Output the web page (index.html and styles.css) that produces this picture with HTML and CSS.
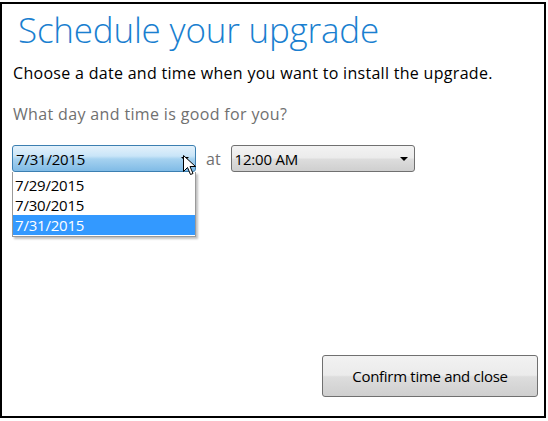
FILE: index.html
```html
<!DOCTYPE html>
<html lang="en">
  <head>
    <meta charset="UTF-8" />
    <title>Schedule your upgrade</title>
    <link rel="stylesheet" href="styles.css">
  </head>
  <body>
    <div class="frame">
      <h1 class="title">Schedule your upgrade</h1>
      <p class="lead">Choose a date and time when you want to install the upgrade.</p>
      <p class="question">What day and time is good for you?</p>

      <div class="pickers">
        <div class="combo-wrap">
          <div class="combo combo-open">
            <span>7/31/2015</span>
            <span class="arrow"></span>
          </div>
          <ul class="dropdown">
            <li>7/29/2015</li>
            <li>7/30/2015</li>
            <li class="selected">7/31/2015</li>
          </ul>
          <svg class="cursor" width="13" height="21" viewBox="0 0 13 21">
            <path d="M0.5 0.5 L0.5 16.5 L4.5 12.5 L7.5 19.5 L10 18.5 L7 11.5 L12.5 11.5 Z" fill="#fff" stroke="#000" stroke-width="1" />
          </svg>
        </div>
        <span class="at">at</span>
        <div class="combo">
          <span>12:00 AM</span>
          <span class="arrow"></span>
        </div>
      </div>

      <button class="confirm">Confirm time and close</button>
    </div>
  </body>
</html>
```

FILE: styles.css
```css
body {
  margin: 0;
  background: #fff;
  font-family: "Open Sans", "Noto Sans", sans-serif;
}
.frame {
  box-sizing: border-box;
  width: 546px;
  height: 416px;
  margin-top: 2px;
  border: 2px solid #000;
  padding: 6px 10px 19px 11px;
  display: flex;
  flex-direction: column;
}
.title {
  margin: 0 0 0 5px;
  font-weight: 300;
  font-size: 35px;
  line-height: 40px;
  color: #1a7fd0;
  letter-spacing: -0.2px;
}
.lead {
  margin: 12px 0 0;
  font-size: 16px;
  line-height: 22px;
  color: #000;
  letter-spacing: 0.3px;
}
.question {
  margin: 19px 0 0;
  font-size: 16px;
  line-height: 22px;
  color: #707070;
  letter-spacing: 0.35px;
}
.pickers {
  display: flex;
  align-items: center;
  margin-top: 20px;
  margin-left: -1px;
}
.combo-wrap {
  position: relative;
}
.combo {
  box-sizing: border-box;
  width: 184px;
  height: 27px;
  border: 1px solid #707070;
  border-radius: 3px;
  background: linear-gradient(#f3f3f3 0%, #ebebeb 48%, #dddddd 52%, #cfcfcf 100%);
  display: flex;
  align-items: center;
  justify-content: space-between;
  padding: 0 6px 0 3px;
  font-size: 15px;
  letter-spacing: -0.2px;
  color: #000;
}
.combo-open {
  border-color: #3c7fb1;
  background: linear-gradient(#e3f1fb 0%, #c9e5f8 40%, #a6d2f0 52%, #80bbe6 100%);
}
.arrow {
  width: 0;
  height: 0;
  border-left: 4px solid transparent;
  border-right: 4px solid transparent;
  border-top: 4px solid #000;
}
.dropdown {
  position: absolute;
  top: 27px;
  left: 0;
  box-sizing: border-box;
  width: 184px;
  margin: 0;
  padding: 3px 0 1px;
  list-style: none;
  background: #fff;
  border: 1px solid #9a9a9a;
  border-top: none;
  box-shadow: 2px 2px 2px rgba(0, 0, 0, 0.25);
  font-size: 15px;
  letter-spacing: -0.2px;
}
.dropdown li {
  height: 20px;
  line-height: 20px;
  padding-left: 2px;
}
.dropdown .selected {
  background: #3399ff;
  color: #fff;
}
.cursor {
  position: absolute;
  left: 171px;
  top: 10px;
}
.at {
  margin: 0 10px 0 10px;
  font-size: 16px;
  color: #707070;
}
.confirm {
  margin-top: auto;
  align-self: flex-end;
  width: 216px;
  height: 42px;
  margin-right: -4px;
  border: 1px solid #707070;
  border-radius: 3px;
  background: linear-gradient(#f2f2f2 0%, #ebebeb 48%, #dddddd 52%, #cfcfcf 100%);
  font-family: "Open Sans", "Noto Sans", sans-serif;
  font-size: 15px;
  letter-spacing: -0.3px;
  color: #000;
}
```
